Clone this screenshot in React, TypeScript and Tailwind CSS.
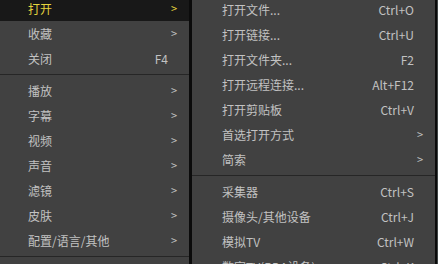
type Item =
  | { kind: "item"; label: string; shortcut?: string; sub?: boolean; active?: boolean }
  | { kind: "sep" };

const mainMenu: Item[] = [
  { kind: "item", label: "打开", sub: true, active: true },
  { kind: "item", label: "收藏", sub: true },
  { kind: "item", label: "关闭", shortcut: "F4" },
  { kind: "sep" },
  { kind: "item", label: "播放", sub: true },
  { kind: "item", label: "字幕", sub: true },
  { kind: "item", label: "视频", sub: true },
  { kind: "item", label: "声音", sub: true },
  { kind: "item", label: "滤镜", sub: true },
  { kind: "item", label: "皮肤", sub: true },
  { kind: "item", label: "配置/语言/其他", sub: true },
  { kind: "sep" },
];

const openMenu: Item[] = [
  { kind: "item", label: "打开文件...", shortcut: "Ctrl+O" },
  { kind: "item", label: "打开链接...", shortcut: "Ctrl+U" },
  { kind: "item", label: "打开文件夹...", shortcut: "F2" },
  { kind: "item", label: "打开远程连接...", shortcut: "Alt+F12" },
  { kind: "item", label: "打开剪贴板", shortcut: "Ctrl+V" },
  { kind: "item", label: "首选打开方式", sub: true },
  { kind: "item", label: "简索", sub: true },
  { kind: "sep" },
  { kind: "item", label: "采集器", shortcut: "Ctrl+S" },
  { kind: "item", label: "摄像头/其他设备", shortcut: "Ctrl+J" },
  { kind: "item", label: "模拟TV", shortcut: "Ctrl+W" },
  { kind: "item", label: "数字TV(BDA设备)", shortcut: "Ctrl+K" },
];

function MenuRow({ item, indent }: { item: Item; indent: string }) {
  if (item.kind === "sep") {
    return (
      <div className="h-[7px] flex flex-col justify-center">
        <div className="h-px bg-[#262626]" />
      </div>
    );
  }
  const color = item.active ? "text-[#e4d43e]" : "text-[#c2c2c2]";
  return (
    <div
      className={`flex items-center h-[25px] pr-[12px] ${indent} ${
        item.active ? "bg-[#181818]" : ""
      } ${color}`}
    >
      <span className="flex-1 whitespace-nowrap">{item.label}</span>
      {item.shortcut && <span className="whitespace-nowrap">{item.shortcut}</span>}
      <span className="w-[9px] flex justify-end text-[11px] leading-none">
        {item.sub ? ">" : ""}
      </span>
    </div>
  );
}

export default function App() {
  return (
    <div
      className="flex h-[264px] w-[438px] overflow-hidden bg-[#3d3d3d] text-[12px]"
      style={{ fontFamily: '"Noto Sans CJK SC", "Noto Sans", sans-serif' }}
    >
      <div className="w-[189px] shrink-0 bg-[#414141] -mt-[4px]">
        {mainMenu.map((item, i) => (
          <MenuRow key={i} item={item} indent="pl-[28px]" />
        ))}
      </div>
      <div className="w-[3px] shrink-0 bg-[#0b0b0b]" />
      <div className="w-[243px] shrink-0 bg-[#414141] -mt-[3px]">
        {openMenu.map((item, i) => (
          <MenuRow key={i} item={item} indent="pl-[30px]" />
        ))}
      </div>
      <div className="w-[2px] shrink-0 bg-[#0b0b0b]" />
      <div className="flex-1 bg-[#3e4444]" />
    </div>
  );
}
